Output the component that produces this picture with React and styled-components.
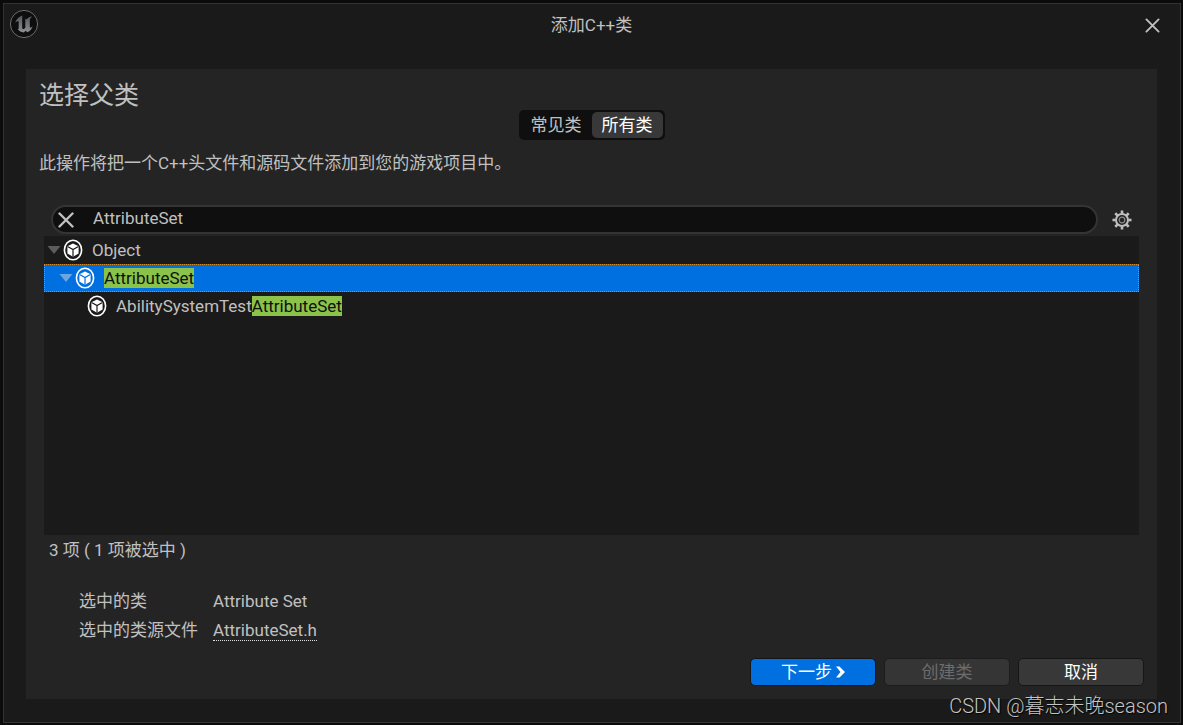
import React, { useState } from 'react';
import styled, { createGlobalStyle } from 'styled-components';

const GlobalStyle = createGlobalStyle`
  * {
    box-sizing: border-box;
  }
  body {
    margin: 0;
    background-color: #0b0b0b;
    color: #c0c0c0;
    font-family: Roboto, "Noto Sans CJK SC", sans-serif;
    font-size: 17px;
    line-height: 20px;
  }
  button, input {
    font: inherit;
    color: inherit;
  }
`;

const StyledWindow = styled.div`
  position: relative;
  display: flex;
  flex-direction: column;
  min-height: 100vh;
  padding: 0 24px 24px 23px;
  background-color: #1a1a1a;
  border: 3px solid #0b0b0b;
  border-right-width: 2px;
  border-bottom-width: 2px;
  box-shadow: inset 0 0 0 1px #333333;
`;

const StyledTitleBar = styled.header`
  display: grid;
  grid-template-columns: 44px 1fr 44px;
  align-items: center;
  height: 44px;
  margin: 0 -17px 22px;
`;

const StyledTitle = styled.h1`
  margin: 0;
  font-size: 17px;
  font-weight: normal;
  text-align: center;
`;

const StyledIconButton = styled.button`
  display: flex;
  align-items: center;
  justify-content: center;
  justify-self: center;
  width: ${({ $narrow }) => ($narrow ? 26 : 32)}px;
  height: 28px;
  padding: 0;
  background: none;
  border: none;
`;

const StyledPanel = styled.main`
  display: flex;
  flex: 1;
  flex-direction: column;
  padding: 13px;
  background-color: #242424;
`;

const StyledHeading = styled.h2`
  margin: 0;
  font-size: 25px;
  line-height: 28px;
  font-weight: normal;
`;

const StyledSegments = styled.div`
  display: flex;
  align-self: center;
  padding: 2px;
  background-color: #0f0f0f;
  border-radius: 5px;
`;

const StyledSegment = styled.button`
  width: 71px;
  height: 26px;
  padding: 0;
  border: none;
  border-radius: 5px;
  background-color: ${({ $active }) => ($active ? '#383838' : 'transparent')};
  color: ${({ $active }) => ($active ? '#ffffff' : '#c0c0c0')};
`;

const StyledDescription = styled.p`
  margin: 13px 0 32px;
`;

const StyledSearchRow = styled.div`
  display: flex;
  align-items: center;
  gap: 8px;
  margin: 0 6px 2px 12px;
`;

const StyledSearchBox = styled.div`
  display: flex;
  flex: 1;
  align-items: center;
  height: 29px;
  background-color: #0f0f0f;
  border: 2px solid #343434;
  border-radius: 15px;
`;

const StyledInput = styled.input`
  flex: 1;
  min-width: 0;
  height: 24px;
  padding: 0 14px 4px;
  background: none;
  border: none;
  outline: none;
`;

const StyledTree = styled.ul`
  flex: 1;
  min-height: 120px;
  margin: 0 5px;
  padding: 0;
  background-color: #1a1a1a;
  list-style: none;
`;

const StyledTreeRow = styled.li`
  display: flex;
  align-items: center;
  height: 28px;
  padding-left: ${({ $depth }) => 2 + $depth * 12}px;
  border: 1px dotted ${({ $selected }) => ($selected ? '#d08a2c' : 'transparent')};
  background-color: ${({ $selected }) => ($selected ? '#0070e0' : 'transparent')};
`;

const StyledArrow = styled.svg`
  flex: none;
  width: 14px;
  height: 8px;
  fill: ${({ $selected }) => ($selected ? '#6ca6e0' : '#5c5c5c')};
  visibility: ${({ $leaf }) => ($leaf ? 'hidden' : 'visible')};
`;

const StyledClassIcon = styled.svg`
  flex: none;
  width: 20px;
  height: 22px;
  margin: 0 9px 0 2px;
`;

const StyledMark = styled.mark`
  background-color: #8bc34a;
  color: #0f0f0f;
`;

const StyledCount = styled.div`
  margin: 5px 10px 31px;
`;

const StyledDetails = styled.dl`
  display: grid;
  grid-template-columns: 134px 1fr;
  row-gap: 9px;
  margin: 0 40px 18px;
`;

const StyledTerm = styled.dt`
  margin: 0;
  white-space: nowrap;
`;

const StyledValue = styled.dd`
  margin: 0;
`;

const StyledFileLink = styled.a`
  color: inherit;
  text-decoration: none;
  border-bottom: 1px dotted #e0e0e0;
`;

const StyledFooter = styled.footer`
  display: flex;
  justify-content: flex-end;
  gap: 8px;
`;

const StyledButton = styled.button`
  display: flex;
  align-items: center;
  justify-content: center;
  gap: 4px;
  width: 126px;
  height: 28px;
  padding: 0;
  border: 1px solid #151515;
  border-radius: 5px;
  background-color: ${({ $primary }) => ($primary ? '#0070e0' : '#383838')};
  color: #ffffff;
  &:disabled {
    background-color: #353535;
    border-color: #1c1c1c;
    color: #6c6c6c;
  }
`;

const StyledWatermark = styled.div`
  position: absolute;
  right: 13px;
  bottom: 5px;
  font-size: 20px;
  font-weight: 300;
  line-height: 24px;
  color: #c4c4c4;
  text-shadow: 1px 1px 1px #000000;
`;

const UnrealLogo = () => (
  <svg width="30" height="30" viewBox="0 0 30 30" aria-hidden="true">
    <defs>
      <linearGradient id="logoFill" x1="0" y1="0" x2="0" y2="1">
        <stop offset="0" stopColor="#54595b" />
        <stop offset="1" stopColor="#8c9193" />
      </linearGradient>
    </defs>
    <circle cx="15" cy="14" r="13.6" fill="#0e0e0e" stroke="#6e6e6e" />
    <path
      transform="translate(0 -1)"
      fill="url(#logoFill)"
      d="M13.6 6.4C10 7.400 7.300 10 6 14.200c1-1.400 2.200-2.400 3-2.200.5.1.7.6.7 1.400v5.800c0 .8-.5 1.100-1.200.9 1.400 2 3.600 3.200 6.400 3.400l1.700-1.700 1.800 1.400c2.500-1 4.400-3 5.300-6-1 1.100-1.800 1.600-2.400 1.400-.4-.1-.5-.5-.5-1V10.600c.4-1.200 1.200-2.100 2.400-3.100-2.400.2-4.400 1.300-5.900 3.100-.4-.5-.9-.8-1.500-1 .4.700.5 1.300.5 2v7.200c-.4.700-1 1.100-1.700 1.100-.9 0-1.400-.5-1.400-1.500V9.200c0-1 .1-1.900.4-2.800z"
    />
  </svg>
);

const CloseIcon = ({ size, width }) => (
  <svg width={size} height={size} viewBox="0 0 16 16" fill="none" stroke="#c0c0c0" strokeWidth={width} aria-hidden="true">
    <path d="M1.500 1.500l13 13M14.500 1.500l-13 13" strokeLinecap="round" />
  </svg>
);

const GearIcon = () => (
  <svg width="20" height="20" viewBox="0 0 20 20" fill="none" stroke="#c0c0c0" aria-hidden="true">
    <circle cx="10" cy="10" r="6" strokeWidth="2" />
    <circle cx="10" cy="10" r="2.800" strokeWidth="1.200" stroke="#8c8c8c" />
    {[0, 45, 90, 135, 180, 225, 270, 315].map((angle) => (
      <path key={angle} d="M10 0.500v3" strokeWidth="2.600" transform={`rotate(${angle} 10 10)`} />
    ))}
  </svg>
);

const ClassIcon = ({ selected }) => {
  const inner = selected ? '#0070e0' : '#1a1a1a';
  return (
    <StyledClassIcon viewBox="0 0 20 22" aria-hidden="true">
      <ellipse cx="10" cy="11" rx="8.600" ry="9.800" fill={inner} stroke="#ffffff" strokeWidth="1.600" />
      <path d="M10 4.400l5.600 2.900v7.200L10 17.800l-5.600-3.300V7.300z" fill="#ffffff" />
      <path d="M4.600 7.500L10 10.500l5.400-3M10 10.500v7.200" fill="none" stroke={inner} strokeWidth="1.200" />
    </StyledClassIcon>
  );
};

const classes = [
  { name: 'Object', depth: 0 },
  { name: 'AttributeSet', depth: 1 },
  { name: 'AbilitySystemTestAttributeSet', depth: 2, leaf: true },
];

const HighlightedName = ({ name, query }) => {
  const start = query ? name.indexOf(query) : -1;
  if (start < 0) {
    return <span>{name}</span>;
  }
  return (
    <span>
      {name.slice(0, start)}
      <StyledMark>{query}</StyledMark>
      {name.slice(start + query.length)}
    </span>
  );
};

const App = () => {
  const [query, setQuery] = useState('AttributeSet');
  const [tab, setTab] = useState('all');
  const [selected, setSelected] = useState('AttributeSet');

  return (
    <>
      <GlobalStyle />
      <StyledWindow>
        <StyledTitleBar>
          <UnrealLogo />
          <StyledTitle>添加C++类</StyledTitle>
          <StyledIconButton aria-label="关闭">
            <CloseIcon size={15} width={2} />
          </StyledIconButton>
        </StyledTitleBar>

        <StyledPanel>
          <StyledHeading>选择父类</StyledHeading>
          <StyledSegments>
            <StyledSegment $active={tab === 'common'} onClick={() => setTab('common')}>常见类</StyledSegment>
            <StyledSegment $active={tab === 'all'} onClick={() => setTab('all')}>所有类</StyledSegment>
          </StyledSegments>
          <StyledDescription>此操作将把一个C++头文件和源码文件添加到您的游戏项目中。</StyledDescription>

          <StyledSearchRow>
            <StyledSearchBox>
              <StyledIconButton $narrow aria-label="清除" onClick={() => setQuery('')}>
                <CloseIcon size={16} width={2.4} />
              </StyledIconButton>
              <StyledInput
                aria-label="搜索"
                value={query}
                onChange={(e) => setQuery(e.target.value)}
              />
            </StyledSearchBox>
            <StyledIconButton aria-label="设置">
              <GearIcon />
            </StyledIconButton>
          </StyledSearchRow>

          <StyledTree>
            {classes.map(({ name, depth, leaf }) => (
              <StyledTreeRow
                key={name}
                $depth={depth}
                $selected={name === selected}
                onClick={() => setSelected(name)}
              >
                <StyledArrow viewBox="0 0 14 8" $selected={name === selected} $leaf={leaf}>
                  <path d="M0.500 0h13L7 8z" />
                </StyledArrow>
                <ClassIcon selected={name === selected} />
                <HighlightedName name={name} query={query} />
              </StyledTreeRow>
            ))}
          </StyledTree>
          <StyledCount>3 项 ( 1 项被选中 )</StyledCount>

          <StyledDetails>
            <StyledTerm>选中的类</StyledTerm>
            <StyledValue>Attribute Set</StyledValue>
            <StyledTerm>选中的类源文件</StyledTerm>
            <StyledValue>
              <StyledFileLink href="#source">AttributeSet.h</StyledFileLink>
            </StyledValue>
          </StyledDetails>

          <StyledFooter>
            <StyledButton $primary>
              下一步
              <svg width="9" height="12" viewBox="0 0 9 12" aria-hidden="true">
                <path d="M0 0.500h3.500L9 6l-5.500 5.500H0L4.500 6z" fill="#ffffff" />
              </svg>
            </StyledButton>
            <StyledButton disabled>创建类</StyledButton>
            <StyledButton>取消</StyledButton>
          </StyledFooter>
        </StyledPanel>
        <StyledWatermark>CSDN @暮志未晚season</StyledWatermark>
      </StyledWindow>
    </>
  );
};

export default App;
